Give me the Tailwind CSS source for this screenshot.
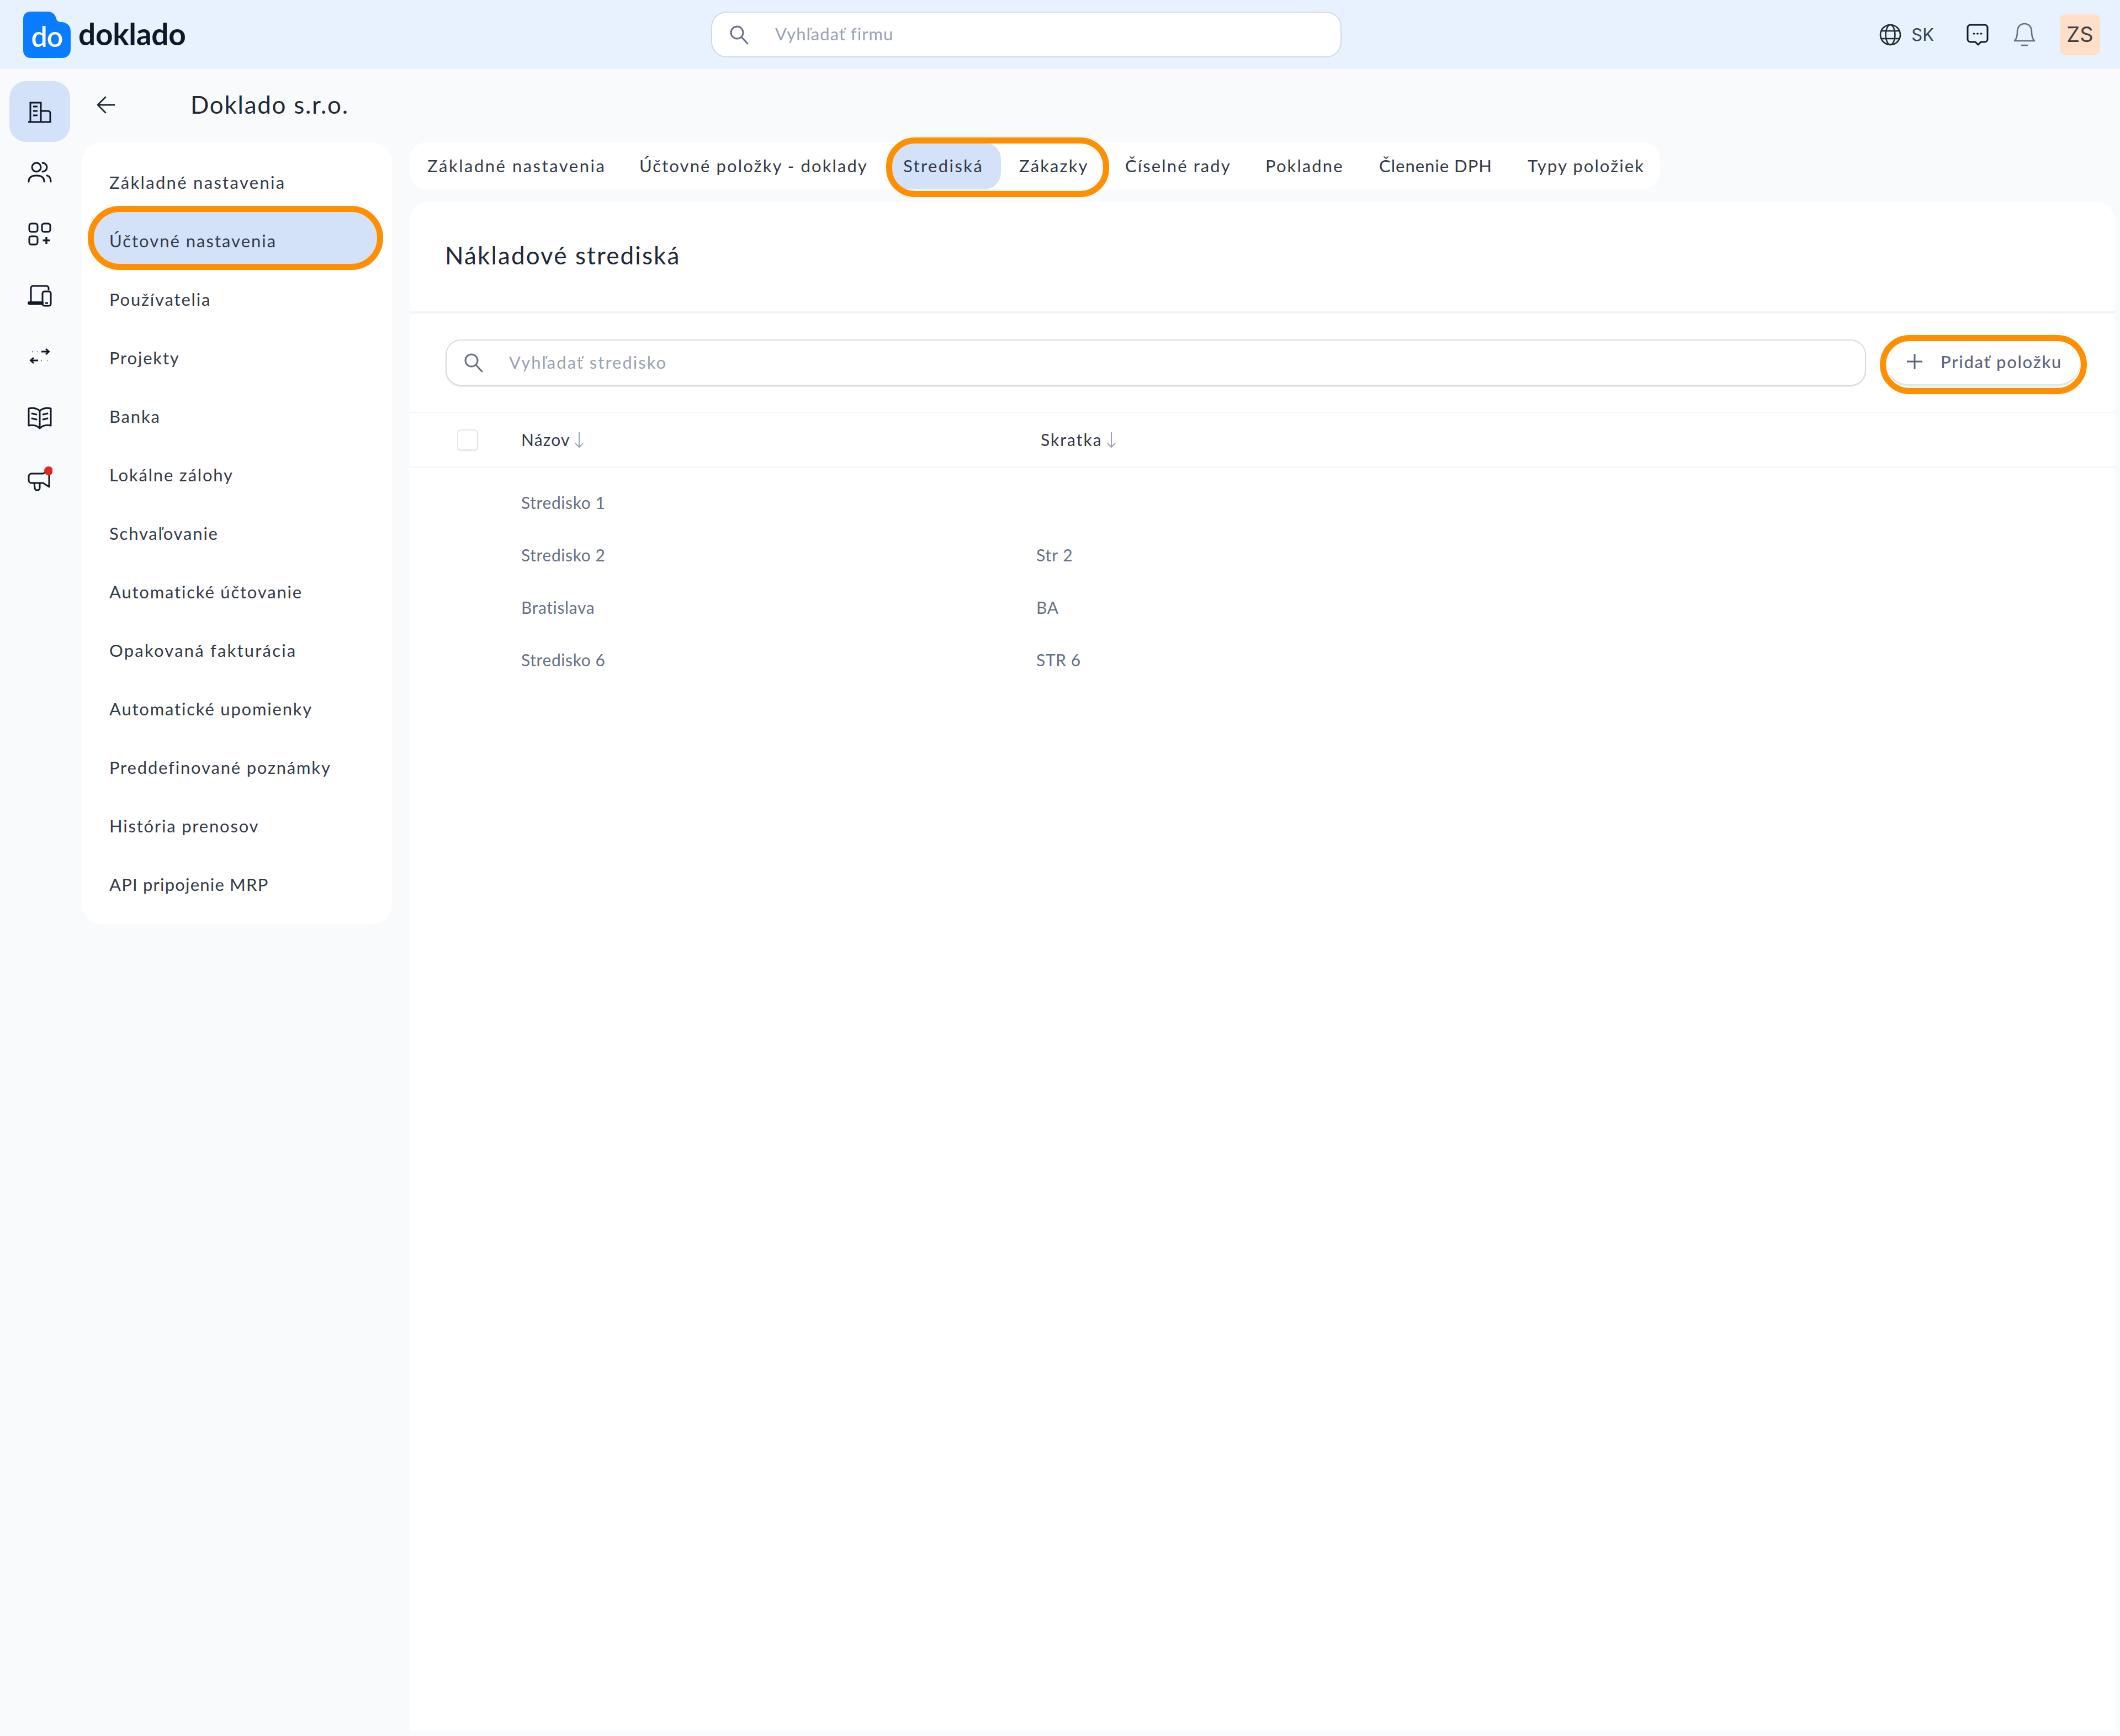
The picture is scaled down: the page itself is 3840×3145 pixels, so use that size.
<!DOCTYPE html>
<html lang="sk">
<head>
  <meta charset="UTF-8" />
  <title>Doklado</title>
  <script src="https://cdn.jsdelivr.net/npm/@tailwindcss/browser@4"></script>
</head>
<body class="bg-[#f9fafc] text-[#1f2937] font-['Lato',sans-serif] h-screen flex flex-col overflow-hidden">

  <!-- Top bar -->
  <header class="h-[125px] shrink-0 bg-[#e8f2fe] flex items-center">
    <div class="w-[1288px] shrink-0 pl-[42px] flex items-center gap-[14px]">
      <div class="relative w-[86px] h-[84px] flex items-center justify-center">
        <svg class="absolute inset-0" width="86" height="84" viewBox="0 0 86 84"><path d="M14 0H44C53 0 58 5 60 13C61 17 64 19 70 19C80 20 86 26 86 36V68C86 78 80 84 70 84H14C5 84 0 78 0 70V14C0 5 5 0 14 0Z" fill="#0a7cff"/></svg>
        <span class="relative text-white text-[52px] font-semibold leading-none tracking-[-1px] mt-[4px]">do</span>
      </div>
      <span class="text-[#0f172a] text-[55px] font-bold leading-none tracking-[-0.3px] -mt-[2px]">doklado</span>
    </div>
    <div class="w-[1142px] h-[83px] bg-white rounded-[28px] border-2 border-[#d3d9e3] flex items-center pl-[30px]">
      <svg width="38" height="38" viewBox="0 0 38 38" fill="none" stroke="#667085" stroke-width="3"><circle cx="15" cy="15" r="11"/><path d="M23 23L34 35" stroke-linecap="round"/></svg>
      <span class="ml-[46px] text-[#98a2b3] text-[31px] tracking-[1px] -mt-[2px]">Vyhľadať firmu</span>
    </div>
    <div class="ml-auto flex items-center pr-[36px]">
      <svg width="40" height="40" viewBox="0 0 40 40" fill="none" stroke="#1f2937" stroke-width="2.6"><circle cx="20" cy="20" r="18"/><ellipse cx="20" cy="20" rx="8.5" ry="18"/><path d="M3.5 13H36.5M3.5 27H36.5"/></svg>
      <span class="ml-[18px] text-[#374151] text-[31px] font-['Inter',sans-serif] leading-none">SK</span>
      <svg class="ml-[58px]" width="42" height="42" viewBox="0 0 42 42" fill="none" stroke="#111827" stroke-width="3"><path d="M8 3H34A5 5 0 0 1 39 8V29A5 5 0 0 1 34 34H27L22 39L17 34H8A5 5 0 0 1 3 29V8A5 5 0 0 1 8 3Z" stroke-linejoin="round"/><path d="M14 19H15M20.5 19H21.5M27 19H28" stroke-linecap="round"/></svg>
      <svg class="ml-[44px]" width="40" height="44" viewBox="0 0 40 44" fill="none" stroke="#667085" stroke-width="2.6"><path d="M2 33C6 29 7 25 7 17C7 8 12 2 20 2S33 8 33 17C33 25 34 29 38 33Z" stroke-linejoin="round"/><path d="M15 41H25" stroke-linecap="round"/></svg>
      <div class="ml-[44px] w-[73px] h-[74px] rounded-[10px] bg-[#ffdfc8] flex items-center justify-center text-[#3f3f46] text-[38px] font-['Inter',sans-serif]">ZS</div>
    </div>
  </header>

  <div class="flex-1 flex min-h-0">
    <!-- Icon rail -->
    <nav class="w-[148px] shrink-0 pt-[22px] pl-[17px] flex flex-col gap-[1px]">
      <div class="w-[110px] h-[110px] rounded-[30px] bg-[#d4e2f9] flex items-center justify-center">
        <svg width="44" height="44" viewBox="0 0 44 44" fill="none" stroke="#111827" stroke-width="3"><path d="M5 41V6H24V41M24 21H37A4 4 0 0 1 41 25V41M1 41H43"/><path d="M10 13H18M10 21H18M10 29H18" stroke-width="3"/></svg>
      </div>
      <div class="w-[110px] h-[110px] flex items-center justify-center -mt-[1px] mb-[1px]">
        <svg width="44" height="44" viewBox="0 0 44 44" fill="none" stroke="#111827" stroke-width="3" stroke-linecap="round"><circle cx="16" cy="13" r="8"/><path d="M27 5A8 8 0 0 1 27 21M2 39C2 31 8 28 16 28S30 31 30 39M35 28C40 29 42 33 42 39"/></svg>
      </div>
      <div class="w-[110px] h-[110px] flex items-center justify-center -mt-[1px] mb-[1px]">
        <svg width="44" height="44" viewBox="0 0 44 44" fill="none" stroke="#111827" stroke-width="3"><rect x="3" y="4" width="15" height="15" rx="4"/><rect x="26" y="4" width="15" height="15" rx="4"/><rect x="3" y="27" width="15" height="15" rx="4"/><path d="M34 28V41M27.5 34.5H40.5" stroke-width="3.4"/></svg>
      </div>
      <div class="w-[110px] h-[110px] flex items-center justify-center">
        <svg width="44" height="44" viewBox="0 0 44 44" fill="none" stroke="#111827" stroke-width="3"><path d="M6 33V9A4 4 0 0 1 10 5H34A4 4 0 0 1 38 9V13"/><path d="M3 36H26" stroke-width="6" stroke-linecap="round"/><rect x="27" y="15" width="15" height="26" rx="3.5"/><path d="M32 36H37"/></svg>
      </div>
      <div class="w-[110px] h-[110px] flex items-center justify-center -mt-[1px] mb-[1px]">
        <svg width="44" height="44" viewBox="0 0 44 44" fill="none" stroke="#111827" stroke-width="3"><path d="M25 14H38M33 9L38.5 14L33 19M19 30H6M11 25L5.5 30L11 35"/><path d="M8 14H9M18 14H19M25 30H26M35 30H36" stroke-width="2.4" stroke="#4b5563"/></svg>
      </div>
      <div class="w-[110px] h-[110px] flex items-center justify-center">
        <svg width="44" height="44" viewBox="0 0 44 44" fill="none" stroke="#111827" stroke-width="3" stroke-linejoin="round"><path d="M2 5C10 3 17 5 22 9C27 5 34 3 42 5V36C34 34 27 36 22 41C17 36 10 34 2 36Z"/><path d="M22 9V41"/><path d="M8 14L16 16M8 23L16 25M28 16L36 14M28 25L36 23" stroke-linecap="round"/></svg>
      </div>
      <div class="w-[110px] h-[110px] flex items-center justify-center">
        <svg width="46" height="46" viewBox="0 0 46 46" fill="none" stroke="#111827" stroke-width="3" stroke-linejoin="round"><path d="M8 13H29L40 7V37L29 30H8A5 5 0 0 1 3 25V18A5 5 0 0 1 8 13Z"/><path d="M13 30L14 39A4 4 0 0 0 18 43H19A4 4 0 0 0 23 39V30"/><circle cx="39" cy="8" r="8" fill="#e3261e" stroke="none"/></svg>
      </div>
    </nav>

    <div class="flex-1 min-w-0 flex flex-col">
      <!-- Title row -->
      <div class="h-[133px] shrink-0 flex items-center pb-[4px]">
        <svg class="ml-[26px]" width="36" height="36" viewBox="0 0 36 36" fill="none" stroke="#1f2937" stroke-width="2.8" stroke-linecap="round" stroke-linejoin="round"><path d="M33 18H4M17 4L3 18L17 32"/></svg>
        <h1 class="ml-[135px] -mt-[2px] text-[44px] font-normal tracking-[1.7px] leading-none">Doklado s.r.o.</h1>
      </div>

      <div class="flex-1 min-h-0 flex gap-[32px] pr-[9px] pb-[10px]">
        <!-- Settings menu -->
        <aside class="w-[562px] shrink-0 self-start bg-white rounded-[36px] py-[19px] pl-[17px] pr-[20px] text-[31px] tracking-[1.8px] text-[#333a47]">
          <div class="h-[106px] pl-[33px] flex items-center tracking-[2.3px]">Základné nastavenia</div>
          <div class="relative h-[106px] pl-[33px] flex items-center bg-[#d4e2f9] rounded-[48px] tracking-[2px]">
            Účtovné nastavenia
            <div class="absolute -left-[6px] -right-[4px] -top-[10px] bottom-0 rounded-[58px] border-[11px] border-[#ff8f00]"></div>
          </div>
          <div class="h-[106px] pl-[33px] flex items-center">Používatelia</div>
          <div class="h-[106px] pl-[33px] flex items-center">Projekty</div>
          <div class="h-[106px] pl-[33px] flex items-center">Banka</div>
          <div class="h-[106px] pl-[33px] flex items-center">Lokálne zálohy</div>
          <div class="h-[106px] pl-[33px] flex items-center">Schvaľovanie</div>
          <div class="h-[106px] pl-[33px] flex items-center">Automatické účtovanie</div>
          <div class="h-[106px] pl-[33px] flex items-center tracking-[2.2px]">Opakovaná fakturácia</div>
          <div class="h-[106px] pl-[33px] flex items-center">Automatické upomienky</div>
          <div class="h-[106px] pl-[33px] flex items-center">Preddefinované poznámky</div>
          <div class="h-[106px] pl-[33px] flex items-center">História prenosov</div>
          <div class="h-[106px] pl-[33px] flex items-center tracking-[1.2px]">API pripojenie MRP</div>
        </aside>

        <div class="flex-1 min-w-0 flex flex-col gap-[22px]">
          <!-- Tabs -->
          <div class="self-start h-[85px] bg-white rounded-[30px] flex items-center text-[31px] tracking-[2.1px] text-[#333a47]">
            <div class="w-[384px] pl-[32px] tracking-[2.5px]">Základné nastavenia</div>
            <div class="w-[485px] pl-[32px]">Účtovné položky - doklady</div>
            <div class="relative flex items-center h-full">
              <div class="w-[202px] h-full pl-[25px] flex items-center bg-[#d4e2f9] rounded-[30px] tracking-[2.4px]">Strediská</div>
              <div class="w-[193px] pl-[33px]">Zákazky</div>
              <div class="absolute -left-[6px] -right-[3px] -top-[9px] -bottom-[14px] rounded-[52px] border-[11px] border-[#ff8f00]"></div>
            </div>
            <div class="w-[254px] pl-[32px]">Číselné rady</div>
            <div class="w-[206px] pl-[32px]">Pokladne</div>
            <div class="w-[269px] pl-[32px] tracking-[1px]">Členenie DPH</div>
            <div class="w-[272px] pl-[32px]">Typy položiek</div>
          </div>

          <!-- Cost centres card -->
          <main class="flex-1 min-h-0 bg-white rounded-t-[36px] flex flex-col">
            <div class="h-[203px] shrink-0 pl-[64px] pb-[6px] flex items-center border-b-4 border-[#f3f4f6]">
              <h2 class="text-[44px] font-normal tracking-[2.1px] leading-none text-[#1f2937]">Nákladové strediská</h2>
            </div>
            <div class="h-[180px] shrink-0 pl-[65px] flex items-center border-b-2 border-[#f3f4f6]">
              <div class="w-[2573px] h-[84px] rounded-[28px] border-2 border-[#d8dbe0] flex items-center pl-[30px] shadow-[0_2px_2px_#e5e7eb]">
                <svg width="38" height="38" viewBox="0 0 38 38" fill="none" stroke="#667085" stroke-width="3"><circle cx="15" cy="15" r="11"/><path d="M23 23L34 35" stroke-linecap="round"/></svg>
                <span class="ml-[45px] -mt-[2px] text-[#98a2b3] text-[31px] tracking-[2px]">Vyhľadať stredisko</span>
              </div>
              <div class="relative ml-[36px] w-[352px] h-[85px] rounded-[42px] bg-white border-b-4 border-[#e3e6eb] flex items-center pl-[36px] text-[#5b6480] text-[31px] font-medium tracking-[1.7px]">
                <svg width="32" height="32" viewBox="0 0 32 32" fill="none" stroke="#5b6480" stroke-width="3"><path d="M16 2V30M2 16H30"/></svg>
                <span class="ml-[31px]">Pridať položku</span>
                <div class="absolute -left-[11px] -right-[12px] -top-[8px] -bottom-[18px] rounded-[54px] border-[11px] border-[#ff8f00]"></div>
              </div>
            </div>
            <div class="h-[99px] shrink-0 flex items-center border-b-2 border-[#f3f4f6] text-[30px] text-[#333a47]">
              <div class="ml-[86px] w-[38px] h-[38px] rounded-[7px] border-2 border-[#e2e5ea] shadow-[0_2px_2px_#eef0f3]"></div>
              <div class="ml-[78px] w-[934px] shrink-0 flex items-center gap-[6px]">
                <span class="tracking-[1.2px]">Názov</span>
                <svg width="20" height="30" viewBox="0 0 20 30" fill="none" stroke="#9ca3af" stroke-width="2"><path d="M10 1V28M3 21L10 28L17 21"/></svg>
              </div>
              <div class="ml-[7px] flex items-center gap-[6px]">
                <span class="tracking-[2px]">Skratka</span>
                <svg width="20" height="30" viewBox="0 0 20 30" fill="none" stroke="#9ca3af" stroke-width="2"><path d="M10 1V28M3 21L10 28L17 21"/></svg>
              </div>
            </div>
            <div class="pt-[16px] text-[30px] tracking-[0.6px] text-[#667085]">
              <div class="h-[95px] flex items-center pl-[202px]"><div class="w-[933px]">Stredisko 1</div><div></div></div>
              <div class="h-[95px] flex items-center pl-[202px]"><div class="w-[933px]">Stredisko 2</div><div class="tracking-[1px]">Str 2</div></div>
              <div class="h-[95px] flex items-center pl-[202px]"><div class="w-[933px]">Bratislava</div><div>BA</div></div>
              <div class="h-[95px] flex items-center pl-[202px]"><div class="w-[933px]">Stredisko 6</div><div>STR 6</div></div>
            </div>
          </main>
        </div>
      </div>
    </div>
  </div>
</body>
</html>
